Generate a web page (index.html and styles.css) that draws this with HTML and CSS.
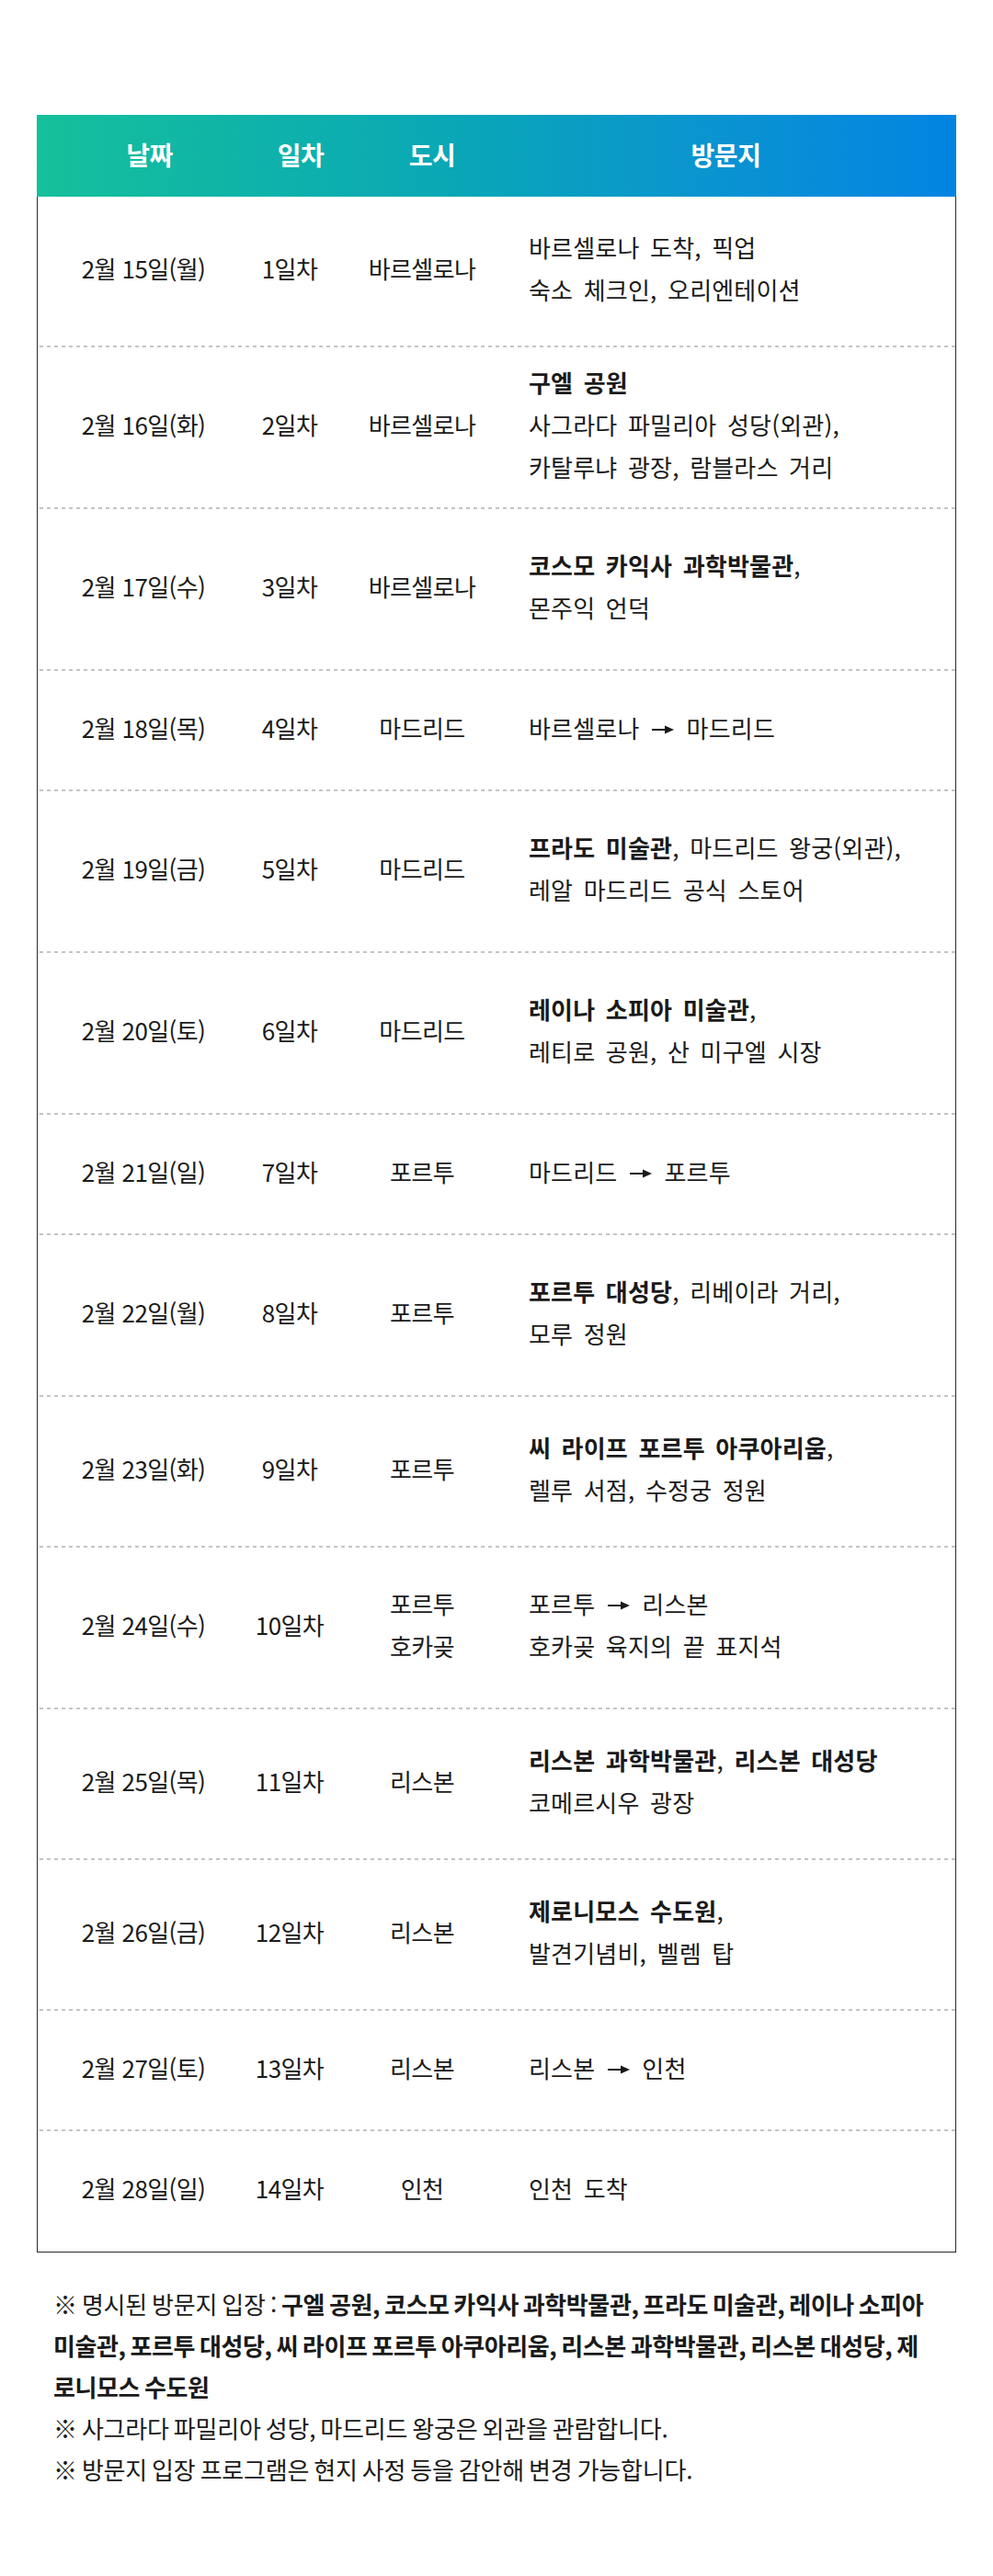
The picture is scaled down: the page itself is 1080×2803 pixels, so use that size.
FILE: index.html
```html
<!DOCTYPE html>
<html lang="ko">
<head>
<meta charset="utf-8">
<title>일정표</title>
<link rel="stylesheet" href="styles.css">
</head>
<body>
<div class="page">
  <div class="schedule">
    <div class="schedule__head">
      <div class="hcell hcell--date">날짜</div>
      <div class="hcell hcell--day">일차</div>
      <div class="hcell hcell--city">도시</div>
      <div class="hcell hcell--visit">방문지</div>
    </div>
    <div class="schedule__body">
      <div class="row row--two">
        <div class="cell cell--date">2월 15일(월)</div>
        <div class="cell cell--day">1일차</div>
        <div class="cell cell--city">바르셀로나</div>
        <div class="cell cell--visit">바르셀로나 도착, 픽업<br>숙소 체크인, 오리엔테이션</div>
      </div>
      <div class="row row--tall">
        <div class="cell cell--date">2월 16일(화)</div>
        <div class="cell cell--day">2일차</div>
        <div class="cell cell--city">바르셀로나</div>
        <div class="cell cell--visit"><b>구엘 공원</b><br>사그라다 파밀리아 성당(외관),<br>카탈루냐 광장, 람블라스 거리</div>
      </div>
      <div class="row row--tall">
        <div class="cell cell--date">2월 17일(수)</div>
        <div class="cell cell--day">3일차</div>
        <div class="cell cell--city">바르셀로나</div>
        <div class="cell cell--visit"><b>코스모 카익사 과학박물관</b>,<br>몬주익 언덕</div>
      </div>
      <div class="row row--one">
        <div class="cell cell--date">2월 18일(목)</div>
        <div class="cell cell--day">4일차</div>
        <div class="cell cell--city">마드리드</div>
        <div class="cell cell--visit">바르셀로나 <svg class="arrow" viewBox="0 0 24 12" aria-label="→"><path d="M0 6H16" stroke="#1a1a1a" stroke-width="2"/><path d="M14 1.5L24 6L14 10.5Z" fill="#1a1a1a"/></svg> 마드리드</div>
      </div>
      <div class="row row--tall">
        <div class="cell cell--date">2월 19일(금)</div>
        <div class="cell cell--day">5일차</div>
        <div class="cell cell--city">마드리드</div>
        <div class="cell cell--visit"><b>프라도 미술관</b>, 마드리드 왕궁(외관),<br>레알 마드리드 공식 스토어</div>
      </div>
      <div class="row row--tall">
        <div class="cell cell--date">2월 20일(토)</div>
        <div class="cell cell--day">6일차</div>
        <div class="cell cell--city">마드리드</div>
        <div class="cell cell--visit"><b>레이나 소피아 미술관</b>,<br>레티로 공원, 산 미구엘 시장</div>
      </div>
      <div class="row row--one">
        <div class="cell cell--date">2월 21일(일)</div>
        <div class="cell cell--day">7일차</div>
        <div class="cell cell--city">포르투</div>
        <div class="cell cell--visit">마드리드 <svg class="arrow" viewBox="0 0 24 12" aria-label="→"><path d="M0 6H16" stroke="#1a1a1a" stroke-width="2"/><path d="M14 1.5L24 6L14 10.5Z" fill="#1a1a1a"/></svg> 포르투</div>
      </div>
      <div class="row row--tall">
        <div class="cell cell--date">2월 22일(월)</div>
        <div class="cell cell--day">8일차</div>
        <div class="cell cell--city">포르투</div>
        <div class="cell cell--visit"><b>포르투 대성당</b>, 리베이라 거리,<br>모루 정원</div>
      </div>
      <div class="row row--two">
        <div class="cell cell--date">2월 23일(화)</div>
        <div class="cell cell--day">9일차</div>
        <div class="cell cell--city">포르투</div>
        <div class="cell cell--visit"><b>씨 라이프 포르투 아쿠아리움</b>,<br>렐루 서점, 수정궁 정원</div>
      </div>
      <div class="row row--tall">
        <div class="cell cell--date">2월 24일(수)</div>
        <div class="cell cell--day">10일차</div>
        <div class="cell cell--city">포르투<br>호카곶</div>
        <div class="cell cell--visit">포르투 <svg class="arrow" viewBox="0 0 24 12" aria-label="→"><path d="M0 6H16" stroke="#1a1a1a" stroke-width="2"/><path d="M14 1.5L24 6L14 10.5Z" fill="#1a1a1a"/></svg> 리스본<br>호카곶 육지의 끝 표지석</div>
      </div>
      <div class="row row--two">
        <div class="cell cell--date">2월 25일(목)</div>
        <div class="cell cell--day">11일차</div>
        <div class="cell cell--city">리스본</div>
        <div class="cell cell--visit"><b>리스본 과학박물관</b>, <b>리스본 대성당</b><br>코메르시우 광장</div>
      </div>
      <div class="row row--two">
        <div class="cell cell--date">2월 26일(금)</div>
        <div class="cell cell--day">12일차</div>
        <div class="cell cell--city">리스본</div>
        <div class="cell cell--visit"><b>제로니모스 수도원</b>,<br>발견기념비, 벨렘 탑</div>
      </div>
      <div class="row row--one">
        <div class="cell cell--date">2월 27일(토)</div>
        <div class="cell cell--day">13일차</div>
        <div class="cell cell--city">리스본</div>
        <div class="cell cell--visit">리스본 <svg class="arrow" viewBox="0 0 24 12" aria-label="→"><path d="M0 6H16" stroke="#1a1a1a" stroke-width="2"/><path d="M14 1.5L24 6L14 10.5Z" fill="#1a1a1a"/></svg> 인천</div>
      </div>
      <div class="row row--one row--last">
        <div class="cell cell--date">2월 28일(일)</div>
        <div class="cell cell--day">14일차</div>
        <div class="cell cell--city">인천</div>
        <div class="cell cell--visit">인천 도착</div>
      </div>
    </div>
  </div>
  <div class="notes">
    <p class="note">※ 명시된 방문지 입장 : <b>구엘 공원, 코스모 카익사 과학박물관, 프라도 미술관, 레이나 소피아<br>미술관, 포르투 대성당, 씨 라이프 포르투 아쿠아리움, 리스본 과학박물관, 리스본 대성당, 제<br>로니모스 수도원</b></p>
    <p class="note">※ 사그라다 파밀리아 성당, 마드리드 왕궁은 외관을 관람합니다.</p>
    <p class="note">※ 방문지 입장 프로그램은 현지 사정 등을 감안해 변경 가능합니다.</p>
  </div>
</div>
</body>
</html>
```

FILE: styles.css
```css
html, body {
  margin: 0;
  padding: 0;
  background: #ffffff;
}

body {
  font-family: "Noto Sans CJK KR", "Noto Sans", sans-serif;
  color: #1a1a1a;
}

.page {
  padding: 125px 40px 60px;
}

.schedule {
  width: 1000px;
}

.schedule__head {
  display: grid;
  grid-template-columns: 245px 84px 202px 1fr;
  height: 89px;
  align-items: center;
  background: linear-gradient(90deg, #15c09b 0%, #0aa7b6 45%, #0a93d2 75%, #0184e2 100%);
  color: #ffffff;
  font-size: 28px;
  font-weight: 700;
  letter-spacing: -0.5px;
}

.hcell {
  text-align: center;
  line-height: 1;
  padding-bottom: 3px;
}

.hcell--visit {
  padding-right: 32px;
}

.schedule__body {
  border: 1px solid #2a2a2a;
  border-top: none;
}

.row {
  display: grid;
  grid-template-columns: 230px 88px 200px 1fr;
  align-items: center;
  box-sizing: border-box;
  font-size: 26px;
  line-height: 46px;
  letter-spacing: -0.6px;
  background-image: repeating-linear-gradient(90deg, #c4c4c4 0 4px, transparent 4px 8px);
  background-repeat: no-repeat;
  background-position: 2px 100%;
  background-size: calc(100% - 2px) 2px;
}

.row--one {
  height: 131px;
}

.row--two {
  height: 164px;
}

.row--tall {
  height: 176px;
}

.row--last {
  background-image: none;
}

.cell {
  text-align: center;
  padding-bottom: 8px;
}

.cell--visit {
  text-align: left;
  padding-left: 16px;
  letter-spacing: 0.2px;
  word-spacing: 4px;
}

.cell b {
  font-weight: 700;
}

.arrow {
  width: 24px;
  height: 12px;
  vertical-align: 3px;
  margin: 0 2px;
}

.notes {
  margin-top: 33px;
  padding-left: 18px;
}

.note {
  margin: 0;
  font-size: 26px;
  line-height: 45px;
  letter-spacing: -0.2px;
  word-spacing: -2px;
  color: #1a1a1a;
}

.note b {
  font-weight: 700;
  letter-spacing: -0.4px;
}
```
